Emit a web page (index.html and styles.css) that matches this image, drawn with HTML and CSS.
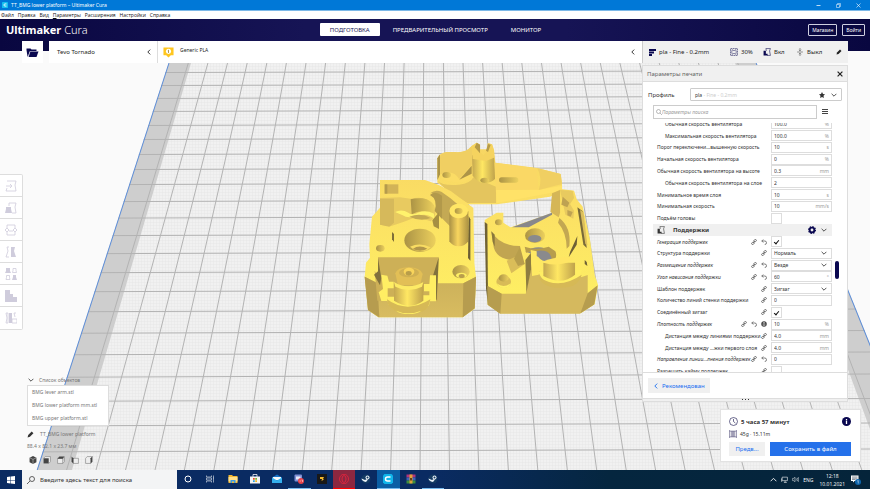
FILE: index.html
```html
<!DOCTYPE html>
<html lang="ru">
<head>
<meta charset="utf-8">
<title>TT_BMG lower platform – Ultimaker Cura</title>
<link rel="stylesheet" href="styles.css">
</head>
<body>
<svg class="sprite" aria-hidden="true">
  <symbol id="chev" viewBox="0 0 10 10"><path d="M1 3l4 4 4-4" fill="none" stroke="currentColor" stroke-width="1.4"/></symbol>
  <symbol id="left" viewBox="0 0 10 10"><path d="M7 1L3 5l4 4" fill="none" stroke="currentColor" stroke-width="1.5"/></symbol>
  <symbol id="link" viewBox="0 0 12 12"><g fill="none" stroke="currentColor" stroke-width="1.6"><rect x="5.5" y="1.5" width="5.5" height="4" rx="2" transform="rotate(-45 8 3.5)"/><rect x="1" y="6.500" width="5.500" height="4" rx="2" transform="rotate(-45 4 8.500)"/><path d="M4.500 7.500l3-3"/></g></symbol>
  <symbol id="reset" viewBox="0 0 12 12"><path d="M1.500 4h6a3.500 3.500 0 0 1 0 7M4.500 1l-3 3 3 3" fill="none" stroke="currentColor" stroke-width="1.500"/></symbol>
  <symbol id="pen" viewBox="0 0 12 12"><path d="M1 11l1-4 6-6 3 3-6 6z" fill="currentColor"/></symbol>
  <symbol id="support" viewBox="0 0 14 14"><path d="M5 1h8l-1.500 4 1.500 8H7M5 1l1 4" fill="none" stroke="currentColor"/><path d="M1 5h4v5h3v3H1z" fill="currentColor"/></symbol>
  <symbol id="steam" viewBox="0 0 20 20"><circle cx="10" cy="10" r="9" fill="#143a63"/><circle cx="13" cy="7" r="4" fill="#e9f0f6"/><circle cx="13" cy="7" r="2" fill="#143a63"/><path d="M1 9l7 3 4-2 2 1-4 5-4-1-4-3z" fill="#e9f0f6"/></symbol>
</svg>

<header class="titlebar">
  <svg class="app-icon" viewBox="0 0 14 14"><rect width="14" height="14" rx="2" fill="#16c0ee"/><path d="M10.500 4.500H7a2.500 2.500 0 0 0 0 5h3.500" fill="none" stroke="#fff" stroke-width="2"/></svg>
  <span class="window-title">TT_BMG lower platform – Ultimaker Cura</span>
  <div class="window-buttons">
    <button aria-label="Свернуть"><svg viewBox="0 0 10 10"><path d="M1 5h8" stroke="#fff" stroke-width="1.500"/></svg></button>
    <button aria-label="Развернуть"><svg viewBox="0 0 10 10"><path d="M1 3h6v6H1zM3 3V1h6v6H7" fill="none" stroke="#fff"/></svg></button>
    <button aria-label="Закрыть"><svg viewBox="0 0 10 10"><path d="M1 1l8 8M9 1L1 9" stroke="#fff" stroke-width="1.200"/></svg></button>
  </div>
</header>

<nav class="menubar">
  <a href="#">Файл</a><a href="#">Правка</a><a href="#">Вид</a><a href="#"><u>П</u>араметры</a><a href="#">Расширения</a><a href="#">Настройки</a><a href="#">Справка</a>
</nav>

<div class="mainbar">
  <div class="brand"><b>Ultimaker</b> <span>Cura</span></div>
  <div class="stages">
    <button class="stage active">ПОДГОТОВКА</button>
    <button class="stage">ПРЕДВАРИТЕЛЬНЫЙ ПРОСМОТР</button>
    <button class="stage">МОНИТОР</button>
  </div>
  <div class="account"><button>Магазин</button><button>Войти</button></div>
</div>

<div class="toolbar">
  <button class="open" aria-label="Открыть"><svg viewBox="0 0 26 22"><path d="M1 3h8l2 2h10v3H8L4 19H3L1 6z" fill="#0a0850"/><path d="M8 9h17l-4 11H5z" fill="#0a0850"/><path d="M8 9L4.500 19.500" stroke="#fff"/></svg></button>
  <div class="machine">
    <button class="printer"><span>Tevo Tornado</span><svg><use href="#left"/></svg></button>
    <button class="material">
      <svg class="extruder" viewBox="0 0 24 24"><path d="M1 1h22v17h-6l-5 5-5-5H1z" fill="#ffc61f"/><circle cx="12" cy="9.500" r="5.500" fill="#fff"/><path d="M10.500 8l1.500-1v6" fill="none" stroke="#8a6a10" stroke-width="1.500"/></svg>
      <span>Generic PLA</span><svg><use href="#left"/></svg>
    </button>
  </div>
  <button class="summary">
    <svg class="i-layers" viewBox="0 0 14 14"><path d="M0 0h14v4H0zM0 5h10v4H0zM0 10h6v4H0z" fill="#0a0850"/></svg>
    <span class="name">pla - Fine - 0.2mm</span>
    <svg class="i-mid" viewBox="0 0 14 14"><path d="M1 1h12v12H1z" fill="none" stroke="#0a0850" stroke-dasharray="3 1"/><path d="M4 3l3 2 3-2 1 4-1 4-3-2-3 2-1-4z" fill="none" stroke="#0a0850" stroke-width=".8"/></svg>
    <span class="infill">30%</span>
    <svg class="i-mid"><use href="#support"/></svg>
    <span class="sup">Вкл</span>
    <svg class="i-mid" viewBox="0 0 14 14"><path d="M2 7h10M7 0v5M7 14V9M5 3l2 2 2-2M5 11l2-2 2 2" fill="none" stroke="#555" stroke-width="1.100"/></svg>
    <span class="adh">Выкл</span>
    <svg class="i-pen"><use href="#pen"/></svg>
  </button>
</div>

<main class="viewport">
  <svg class="scene" viewBox="0 63 870 407" preserveAspectRatio="xMinYMin slice" aria-hidden="true">
    <defs>
      <clipPath id="bed"><path d="M168.500 63H756.600L921 470H36.700z"/></clipPath>
      <pattern id="fine" width="3" height="3" patternUnits="userSpaceOnUse"><path d="M0 .5h3M.5 0v3" stroke="#dcdcdc" stroke-width=".5"/></pattern>
      <linearGradient id="top" x1="0" y1="40" x2="0" y2="560" gradientUnits="userSpaceOnUse"><stop offset="0" stop-color="#f7d563"/><stop offset=".35" stop-color="#fbdf64"/><stop offset="1" stop-color="#fff263"/></linearGradient>
      <linearGradient id="cyl" x1="0" x2="1" y1="0" y2="0"><stop offset="0" stop-color="#aa9145"/><stop offset=".45" stop-color="#f8d55e"/><stop offset="1" stop-color="#ad9344"/></linearGradient>
      <linearGradient id="boss" x1="0" x2="1" y1="0" y2="0"><stop offset="0" stop-color="#c4a750"/><stop offset=".45" stop-color="#ffe763"/><stop offset="1" stop-color="#bfa24c"/></linearGradient>
      <linearGradient id="hole" x1="0" x2="1" y1="0" y2="0"><stop offset="0" stop-color="#ab9345"/><stop offset="1" stop-color="#ecd05d"/></linearGradient>
      <linearGradient id="front" x1="0" x2="0" y1="0" y2="1"><stop offset="0" stop-color="#cbb05a"/><stop offset="1" stop-color="#d8bc60"/></linearGradient>
    </defs>
    <rect y="63" width="870" height="407" fill="#fafafa"/>
    <g clip-path="url(#bed)">
      <path d="M168.500 63H756.600L921 470H36.700z" fill="#cecece"/>
      <path d="M191 63H735L885 470H72z" fill="#f1f1f1"/>
      <path d="M191 63H735L885 470H72z" fill="url(#fine)" opacity=".5"/>
      <path class="grid-x" d="M188.300 63L66.600 470M207.900 63L96 470M227.500 63L125.500 470M247.200 63L155 470M266.800 63L184.400 470M286.400 63L213.900 470M306 63L243.300 470M325.600 63L272.800 470M345.300 63L302.200 470M364.900 63L331.700 470M384.500 63L361.100 470M404.100 63L390.600 470M423.700 63L420 470M443.400 63L449.500 470M463 63L478.900 470M482.600 63L508.400 470M502.200 63L537.800 470M521.800 63L567.300 470M541.500 63L596.700 470M561.100 63L626.200 470M580.700 63L655.600 470M600.300 63L685.100 470M619.900 63L714.500 470M639.600 63L744 470M659.200 63L773.400 470M678.800 63L802.900 470M698.400 63L832.300 470M718 63L861.800 470M737.700 63L891.200 470"/>
      <path class="grid-y" d="M0 73L870 70.500M0 86L870 83.500M0 99L870 96M0 112L870 109M0 126L870 123M0 140L870 137M0 155L870 152M0 170L870 167M0 185L870 182M0 202L870 199M0 218.500L870 215.500M0 236L870 233M0 254L870 251M0 273L870 270M0 292L870 289M0 312L870 309M0 333.500L870 330.500M0 355L870 352M0 377.500L870 374M0 401.500L870 398.500M0 426L870 423M0 452L870 449"/>
      <path d="M168.500 63L36.700 470M756.600 63L921 470" stroke="#5f8fd8" stroke-width="2" fill="none"/>
    </g>
    <g transform="translate(350 130) scale(.3334)">
      <g class="arm">
        <path d="M262 85q6-17 28-19h25q32 4 50-18l15-10 10 6v14h22l2-18 12 3 6 17 4 38 126 16 70 18 4 32v20l-36 16-160 23H350l-88-65z" fill="url(#top)"/>
        <path d="M262 85l8-12v60l-8 18z" fill="#ac9447"/>
        <path d="M270 80q8-12 20-14h25q32 4 50-18l4 52-42 48q-12-22-56-16z" fill="#f0cf62"/>
        <path d="M262 152q15 16 65 12 35-4 43-22l68 28v49H352l-62-38z" fill="#e4c55e"/>
        <path d="M270 135q40-20 58 14l38-42v28q-14 30-60 20-30-2-36-20z" fill="#fbdc65"/>
        <path d="M328 149l37-42v24z" fill="#ad9448"/>
        <path d="M366 76l66-4 3 75q-12 12-32 12t-35-22z" fill="url(#boss)"/>
        <path d="M365 48l15-10 10 6v22l10 8 9-8 4-26 13 3 6 20v20l-24 10-40-6z" fill="#f5d35f"/>
        <path d="M374 52l6-14 10 6v26zM414 42l8 2-8 22-6-4z" fill="#b69b49"/>
        <path d="M434 98l126 17 6 65-128 12z" fill="#fad865"/>
        <path d="M438 180l130-1 68-12v15l-196 37z" fill="#ffe268"/>
        <path d="M562 115q16 30 4 65l70-18-4-30z" fill="#f0cf62"/>
        <ellipse cx="404" cy="151" rx="13" ry="8" fill="url(#hole)"/>
        <ellipse cx="290" cy="135" rx="13" ry="9" fill="url(#hole)"/>
        <rect x="447" y="142" width="58" height="16" rx="8" fill="url(#hole)"/>
      </g>
      <g class="platform">
        <path d="M90 150h135l40 14 38 20 67 50 3 165 5 42-4 95-36 26H85l-31-22-10-100 4-42 12-15-2-40 8-83 24-27z" fill="url(#top)"/>
        <path d="M90 204l60-2 32 4q50-10 70 20 12 30-10 48l-42-14-34 14-44 15-32-5z" fill="#e8ca60"/>
        <path d="M90 206h42v72l-14 12-28-6z" fill="#d6b95b"/>
        <path d="M104 163h41v28h-41z" fill="#d2b357"/><path d="M104 163h8v28h-8z" fill="#b59b4c"/>
        <path d="M182 208q14-4 35-3 28 4 36 28 0 18-16 18-20-15-52 2z" fill="url(#hole)"/>
        <path d="M135 246q20-10 40 2 12 10 32-1 22-8 45 4v15q-22-18-50-8-30 8-44-2z" fill="#fff26c"/>
        <path d="M178 260q34-14 64 4-30 12-64-4z" fill="#c3a853"/>
        <path d="M240 190q15-12 34-5 28 18 54 42l-26 18-2 44-24-24-10-56q-6-24-26-19z" fill="#c4a954"/>
        <path d="M240 195q14-14 36 2v70l-22-24q10-35-14-48z" fill="#b2994b"/>
        <path d="M247 271l20-24v50l-16-8z" fill="#a68f42"/>
        <path d="M298 244h57v90q-10 15-29 15t-28-15z" fill="url(#cyl)"/>
        <ellipse cx="326" cy="243" rx="28" ry="22" fill="#ffe665"/><ellipse cx="326" cy="243" rx="12" ry="9" fill="url(#hole)"/>
        <path d="M356 258l5 10v124l-7-8z" fill="#6b5d33"/>
        <path d="M126 306l6 6v24l-6-8z" fill="#7f6e38"/>
        <ellipse cx="210" cy="331" rx="47" ry="35" fill="url(#hole)"/>
        <path d="M180 350q30-14 62 2l-12 9q-18 5-38-2z" fill="#f8dc62"/>
        <path d="M188 357q20-14 44-1-20 12-44 1z" fill="#b1964a"/>
        <ellipse cx="91" cy="355" rx="13" ry="10" fill="url(#hole)"/><ellipse cx="333" cy="425" rx="26" ry="20" fill="url(#hole)"/><ellipse cx="334" cy="436" rx="16" ry="8" fill="#fff064"/><ellipse cx="335" cy="438" rx="9" ry="6" fill="#b99e4c"/>
        <path d="M44 440l40 20h256l38-20-4 95-36 27H85l-31-22z" fill="url(#front)"/>
        <path d="M44 440l38 20 6 102-34-22zM340 460l38-20-4 95-36 27z" fill="#b69c4f"/>
        <path d="M84 382h182l-4 132h-36l-20 20h-70l-20-22H82l-8-90 10 18z" fill="#cdb057"/>
        <path d="M84 384l10 60-4 22-18-32 12-10zM266 382l-6 128-12-10V440z" fill="#81713d"/>
        <path d="M136 430q6-18 40-18t42 20l-8 34h-66z" fill="#e2bf56"/>
        <ellipse cx="177" cy="428" rx="30" ry="14" fill="#d0b052"/><ellipse cx="177" cy="425" rx="16" ry="12" fill="#f8d45b"/><ellipse cx="176" cy="430" rx="9" ry="7" fill="#b89d4a"/>
        <path d="M94 434l18 3 5 18h14v20h-18v38H94l-8-26 13-10zM240 436h18v78h-20v-30h-16v-22h16z" fill="#ffee63"/>
        <path d="M111 500h22q42 32 84-4h24q4 34-22 44-38 20-84 0-25-12-24-40z" fill="#ffee63"/>
        <path d="M111 508q60 44 130 0-4 28-22 36-46 14-84-2-24-12-24-34z" fill="#d6b956"/>
        <path d="M132 458q40 24 88-2v56q-40 30-88 0z" fill="url(#boss)"/>
        <path d="M132 456q42 26 88 0l-4 14q-40 20-80 0z" fill="#fdea65"/>
        <path d="M138 542q36 16 76 0-12 10-38 10t-38-10z" fill="#fff063"/>
      </g>
      <g class="upper">
        <path d="M404 270l36-22h20v30l22 14 122-42 6-60 22-13 40 5 8 26 18 22 22 100 14 105 10 30-10 58-42 27H450l-37-26z" fill="url(#top)"/>
        <path d="M486 292l120-44v6l-70 38z" fill="#88888b"/>
        <path d="M404 276l8 6 2 242-6-48z" fill="#6f6135"/>
        <path d="M606 190l24-10v68l-4 14-25-16z" fill="#d5b657"/><path d="M630 180l38 2 4 22-12 18 12 20-2 24-24-12z" fill="#e8ca5f"/><path d="M638 200l20 18-6 14-18-8zM652 240l16 6-6 14-10-4z" fill="#bea252"/>
        <path d="M628 264q36 28 30 84l-8 8q0-48-26-78z" fill="#c2a752"/>
        <path d="M682 232l16 12 12 110-10-10z" fill="#796a39"/><path d="M690 240l10 6 12 100-6-4z" fill="#dcbf5d"/>
        <path d="M660 366l22-48-2 26-24 38zM704 390l6 6 2 12-8-6z" fill="#6e6035"/>
        <path d="M424 304q24 44 86 44v30l-30 12q-46-8-50-44z" fill="#c1a551"/><path d="M424 304l10 10v36l-6-14z" fill="#8a783c"/>
        <path d="M470 392l40-18 14 28-40 28z" fill="#dabd59"/><path d="M510 350l14 52-20 6-12-22z" fill="#b89e4c"/>
        <ellipse cx="555" cy="317" rx="30" ry="22" fill="url(#hole)"/><ellipse cx="554" cy="326" rx="20" ry="11" fill="#8a8a8c"/>
        <path d="M526 364q40-24 78 0 20 14 0 30-26 4-40-14z" fill="#8a8a8d"/>
        <path d="M524 350q34 12 72 0l20 14q8 18-10 32 0-38-42-34l-36 6z" fill="#b79d4d"/>
        <path d="M413 468l42 23h72l18-88 20 16 14 26 116-4 18-6v55l28-23-10 57-42 27H450l-37-27z" fill="#d5b95e"/>
        <path d="M413 468l42 23-4 60-38-27zM713 490l30-24-10 57-42 27z" fill="#b69d4f"/>
        <path d="M526 390l17-22v50l-14 70z" fill="#8e7d40"/>
        <path d="M542 360l18 4v20l14 20-8 30-20 4z" fill="#ffe963"/>
        <path d="M565 426h14q50 36 96-6h20q-6 40-42 46-70 8-88-40z" fill="#ffee63"/><path d="M566 440q60 42 129-6-6 30-42 38-74 8-87-32z" fill="#d6b956"/>
        <path d="M580 398h95v36q-40 34-95 4z" fill="url(#boss)"/><path d="M580 394q44-18 94-10-36 30-94 14z" fill="#ffe564"/>
        <ellipse cx="446" cy="277" rx="11" ry="9" fill="url(#hole)"/><ellipse cx="461" cy="455" rx="22" ry="18" fill="#d8bb57"/><ellipse cx="461" cy="444" rx="15" ry="11" fill="url(#hole)"/><path d="M440 460q20 16 42 0-4 14-20 14t-22-14z" fill="#fff165"/>
      </g>
    </g>
  </svg>

  <div class="tools">
    <button aria-label="Переместить"><svg viewBox="0 0 12 12"><path d="M2 1h9l-1 4 1 6H1l1-3M1 6h5M5 4l2 2-2 2"/></svg></button>
    <button aria-label="Масштаб"><svg viewBox="0 0 12 12"><path d="M4 4V1h7l-1 4 1 6H7"/><path class="solid" d="M1 5h5v2l1 4H0l1-4z"/></svg></button>
    <button aria-label="Повернуть"><svg viewBox="0 0 12 12"><path d="M2 4V1h8v3M2 8v3h8V8M0 6l2-2 2 2-2 2zM8 6l2-2 2 2-2 2zM4 7h4"/></svg></button>
    <button aria-label="Отразить"><svg viewBox="0 0 12 12"><path d="M4 1H2l1 4-2 6h3"/><path class="solid" d="M6 1h4L9 5l2 6H6z"/></svg></button>
    <button aria-label="Настройки модели"><svg viewBox="0 0 12 12"><path class="solid" d="M1 0h4v3l1 2H0l1-2zM8 7h3v2l1 3H7l1-3z"/><path d="M8 .5h3v2l.5 2h-4l.5-2zM1.500 7.500h3v2l.5 2H1l.5-2z"/></svg></button>
    <button aria-label="Блокировка поддержки"><svg viewBox="0 0 12 12"><path class="solid" d="M0 0h5v4h3v3h4v5H0z"/></svg></button>
    <button aria-label="Разделение"><svg viewBox="0 0 12 12"><path d="M1 1h2v10H1l1-5zM11 1H9l1 4M7 7h5v4H7z"/><path class="solid" d="M4 1h3v10H4z"/></svg></button>
  </div>

  <section class="objects">
    <button class="objects-head"><svg><use href="#chev"/></svg>Список объектов</button>
    <ul><li>BMG lever arm.stl</li><li>BMG lower platform mm.stl</li><li>BMG upper platform.stl</li></ul>
    <div class="job-name"><svg><use href="#pen"/></svg>TT_BMG lower platform</div>
    <div class="dims">88.4 x 82.1 x 23.7 мм</div>
    <div class="views">
      <button aria-label="3D"><svg viewBox="0 0 14 14"><path d="M7 0l6 3v8l-6 3-6-3V3z" fill="#444"/><path d="M1 3l6 3 6-3M7 6v8" stroke="#ccc" fill="none"/></svg></button>
      <button aria-label="Спереди"><svg viewBox="0 0 14 14"><path d="M1 4l3-3h9v9l-3 3" fill="#eee" stroke="#777"/><path d="M1 4h9v9H1z" fill="#444"/></svg></button>
      <button aria-label="Сверху"><svg viewBox="0 0 14 14"><path d="M1 4h9v9H1zM10 13l3-3V1" fill="#eee" stroke="#777"/><path d="M1 5l3-4h9l-3 4z" fill="#444"/></svg></button>
      <button aria-label="Слева"><svg viewBox="0 0 14 14"><path d="M4 4h9v9H4z" fill="#eee" stroke="#777"/><path d="M1 1l3 3v9l-3-3z" fill="#444"/></svg></button>
      <button aria-label="Справа"><svg viewBox="0 0 14 14"><path d="M1 4l3-3h9L10 4v9H1z" fill="#eee" stroke="#777"/><path d="M10 4l3-3v9l-3 3z" fill="#444"/></svg></button>
    </div>
  </section>

  <section class="settings">
    <div class="settings-head"><h2>Параметры печати</h2><button aria-label="Закрыть"><svg viewBox="0 0 10 10"><path d="M1 1l8 8M9 1L1 9" stroke="#222" stroke-width="2"/></svg></button></div>
    <div class="profile"><span class="profile-label">Профиль</span>
      <button class="profile-box"><span>pla <i>- Fine - 0.2mm</i></span><svg class="star" viewBox="0 0 12 12"><path d="M6 0l2 4 4 .5-3 3 .7 4.500L6 10l-3.700 2L3 7.500l-3-3L4 4z" fill="#333"/></svg><svg><use href="#chev"/></svg></button>
    </div>
    <div class="search-row">
      <label class="search"><svg viewBox="0 0 12 12"><circle cx="5" cy="5" r="4" fill="none" stroke="#777"/><path d="M8 8l4 4" stroke="#777"/></svg><input type="text" placeholder="Параметры поиска" aria-label="Параметры поиска"></label>
      <button aria-label="Видимость параметров"><svg viewBox="0 0 6 6"><path d="M0 .5h6M0 2.500h6M0 4.500h6" stroke="#444" stroke-width="1"/></svg></button>
    </div>
    <div class="scroll">
      <div class="rows">
        <div class="row child"><label for="f1">Обычная скорость вентилятора</label><span class="field"><input id="f1" value="100.0"><em>%</em></span></div>
        <div class="row child"><label for="f2">Максимальная скорость вентилятора</label><span class="field"><input id="f2" value="100.0"><em>%</em></span></div>
        <div class="row"><label for="f3">Порог переключени...вышенную скорость</label><span class="field"><input id="f3" value="10"><em>s</em></span></div>
        <div class="row"><label for="f4">Начальная скорость вентилятора</label><span class="field"><input id="f4" value="0"><em>%</em></span></div>
        <div class="row"><label for="f5">Обычная скорость вентилятора на высоте</label><span class="field"><input id="f5" value="0.3"><em>mm</em></span></div>
        <div class="row child"><label for="f6">Обычная скорость вентилятора на слое</label><span class="field"><input id="f6" value="2"></span></div>
        <div class="row"><label for="f7">Минимальное время слоя</label><span class="field"><input id="f7" value="10"><em>s</em></span></div>
        <div class="row"><label for="f8">Минимальная скорость</label><span class="field"><input id="f8" value="10"><em>mm/s</em></span></div>
        <div class="row"><label for="f9">Подъём головы</label><span class="tick"><input id="f9" type="checkbox"></span></div>
        <button class="category"><svg class="cat-icon"><use href="#support"/></svg><b>Поддержки</b><svg class="gear" viewBox="0 0 14 14"><circle cx="7" cy="7" r="4.200" fill="none" stroke="#0a0850" stroke-width="3.400"/><circle cx="7" cy="7" r="6" fill="none" stroke="#0a0850" stroke-width="2" stroke-dasharray="2.350"/></svg><svg class="arrow"><use href="#chev"/></svg></button>
        <div class="row changed"><label for="f10">Генерация поддержек</label><svg><use href="#link"/></svg><svg><use href="#reset"/></svg><span class="tick"><input id="f10" type="checkbox" checked></span></div>
        <div class="row"><label for="f11">Структура поддержки</label><svg><use href="#link"/></svg><span class="field"><select id="f11"><option>Нормаль</option></select><svg><use href="#chev"/></svg></span></div>
        <div class="row changed"><label for="f12">Размещение поддержек</label><svg><use href="#link"/></svg><svg><use href="#reset"/></svg><span class="field"><select id="f12"><option>Везде</option></select><svg><use href="#chev"/></svg></span></div>
        <div class="row changed"><label for="f13">Угол нависания поддержки</label><svg><use href="#link"/></svg><svg><use href="#reset"/></svg><span class="field"><input id="f13" value="60"><em>°</em></span></div>
        <div class="row"><label for="f14">Шаблон поддержек</label><svg><use href="#link"/></svg><span class="field"><select id="f14"><option>Зигзаг</option></select><svg><use href="#chev"/></svg></span></div>
        <div class="row"><label for="f15">Количество линий стенки поддержки</label><svg><use href="#link"/></svg><span class="field"><input id="f15" value="0"></span></div>
        <div class="row"><label for="f16">Соединённый зигзаг</label><svg><use href="#link"/></svg><span class="tick"><input id="f16" type="checkbox" checked></span></div>
        <div class="row changed"><label for="f17">Плотность поддержек</label><svg><use href="#link"/></svg><svg><use href="#reset"/></svg><svg viewBox="0 0 12 12"><circle cx="6" cy="6" r="5.500" fill="#444"/><path d="M4 3h4M5 3l-1 6h4L7 3M6 5v3" stroke="#ccc" fill="none"/></svg><span class="field"><input id="f17" value="10"><em>%</em></span></div>
        <div class="row child"><label for="f18">Дистанция между линиями поддержки</label><svg><use href="#link"/></svg><span class="field"><input id="f18" value="4.0"><em>mm</em></span></div>
        <div class="row child"><label for="f19">Дистанция между ...жки первого слоя</label><svg><use href="#link"/></svg><span class="field"><input id="f19" value="4.0"><em>mm</em></span></div>
        <div class="row changed"><label for="f20">Направление линии...лнения поддержек</label><svg><use href="#link"/></svg><svg><use href="#reset"/></svg><span class="field"><input id="f20" value="0"></span></div>
        <div class="row"><label for="f21">Разрешить кайму поддержек</label><svg><use href="#link"/></svg><span class="tick"><input id="f21" type="checkbox"></span></div>
      </div>
      <div class="thumb"></div>
    </div>
    <div class="settings-foot"><button><svg><use href="#left"/></svg>Рекомендован</button></div>
    <div class="grip"><i></i><i></i><i></i></div>
  </section>

  <section class="job">
    <div class="job-time"><svg viewBox="0 0 14 14"><circle cx="7" cy="7" r="6.200" fill="none" stroke="#1a1750"/><path d="M7 3v4l3 2.500" fill="none" stroke="#1a1750"/></svg><b>5 часа 57 минут</b><svg class="info" viewBox="0 0 14 14"><circle cx="7" cy="7" r="7" fill="#0a0850"/><path d="M7 3v2M7 6v5" stroke="#fff" stroke-width="2"/></svg></div>
    <div class="job-mat"><svg viewBox="0 0 14 14"><path d="M1 0v14M13 0v14M1 2h12M1 12h12" stroke="#4d4a75"/><path d="M4 2v10M6 2v10M8 2v10M10 2v10" stroke="#4d4a75"/></svg><span>45g · 15.11m</span></div>
    <div class="job-actions"><button class="preview">Предв...</button><button class="save">Сохранить в файл</button></div>
  </section>
</main>

<footer class="taskbar">
  <button class="start" aria-label="Пуск"><svg viewBox="0 0 16 16"><path d="M0 2l7-1v7H0zM8 1l8-1v8H8zM0 9h7v6l-7-1zM8 9h8v7l-8-1z" fill="#fff"/></svg></button>
  <label class="win-search"><svg viewBox="0 0 16 16"><circle cx="10" cy="6" r="5" fill="none" stroke="#333" stroke-width="1.500"/><path d="M6 10l-6 6" stroke="#333" stroke-width="1.500"/></svg><input type="text" placeholder="Введите здесь текст для поиска" aria-label="Поиск"></label>
  <div class="apps">
    <button aria-label="Cortana"><svg viewBox="0 0 20 20"><circle cx="10" cy="10" r="6" fill="none" stroke="#fff" stroke-width="2"/></svg></button>
    <button aria-label="Представление задач"><svg viewBox="0 0 20 20"><path d="M3 3v3h10V3M3 17v-3h10v3M3 8h10v4H3zM17 3v14M16 8h2" fill="none" stroke="#d5dbe6" stroke-width="1.300"/></svg></button>
    <button aria-label="Проводник"><svg viewBox="0 0 20 20"><path d="M1 2h7l2 2h9v14H1z" fill="#f3b731"/><path d="M1 6h18v9H1z" fill="#ffe08a"/><path d="M5 12h10v6h-3v-3H8v3H5z" fill="#3f9be0"/></svg></button>
    <button aria-label="Магазин"><svg viewBox="0 0 20 20"><path d="M6 6V1h8v5" fill="none" stroke="#fff" stroke-width="1.500"/><path d="M0 5h20v14H0z" fill="#f4f4f4"/><path d="M6 8h3.500v3.500H6z" fill="#e8502a"/><path d="M10.500 8H14v3.500h-3.500z" fill="#7cb82f"/><path d="M6 12.500h3.500V16H6z" fill="#2a9fe0"/><path d="M10.500 12.500H14V16h-3.500z" fill="#f5b81c"/></svg></button>
    <button aria-label="Почта"><svg viewBox="0 0 20 20"><path d="M0 7l10-6 10 6v11H0z" fill="#1873c8"/><path d="M2 6h16v6H2z" fill="#f5f8fb"/><path d="M0 7l10 6 10-6v11H0z" fill="#33b0ee"/></svg></button>
    <button class="running" aria-label="Discord"><svg viewBox="0 0 20 20"><rect x="1" y="1" width="15" height="14" rx="2" fill="#7f8fd4"/><path d="M4 5h9v6H4z" fill="#e8ebfa"/><circle cx="14" cy="14" r="6" fill="#e8434a"/><path d="M11 14h3M15 12h2v4" stroke="#fff" fill="none"/></svg></button>
    <button aria-label="Rockstar"><svg viewBox="0 0 20 20"><rect width="20" height="20" fill="#181818"/><path d="M6 6h8l-2 4 2 1-5 3 1-4H6z" fill="#f2b72e"/></svg></button>
    <button class="opera" aria-label="Opera"><svg viewBox="0 0 20 20"><ellipse cx="10" cy="10" rx="9" ry="9.500" fill="none" stroke="#f1243d" stroke-width="1.500"/><ellipse cx="10" cy="10" rx="4" ry="7" fill="none" stroke="#f1243d" stroke-width="1.500"/></svg></button>
    <button aria-label="Steam"><svg><use href="#steam"/></svg></button>
    <button class="running current" aria-label="Cura"><svg viewBox="0 0 20 20"><path d="M3 0h14l3 3v14l-3 3H3l-3-3V3z" fill="#10b5ea"/><path d="M15 6H9a4 4 0 0 0 0 8h6" fill="none" stroke="#fff" stroke-width="3"/></svg></button>
    <button aria-label="WinRAR"><svg viewBox="0 0 20 20"><path d="M1 1h18v6H1z" fill="#b1347c"/><path d="M1 7h18v6H1z" fill="#3f63b8"/><path d="M1 13h18v6H1z" fill="#3f8e3d"/><path d="M7 1h6v18H7z" fill="#e0a23a"/><path d="M8 8h4v5H8z" fill="#6b3d12"/></svg></button>
    <button class="running" aria-label="Steam"><svg><use href="#steam"/></svg></button>
  </div>
  <div class="tray">
    <svg viewBox="0 0 12 12"><path d="M1 9l5-5 5 5" fill="none" stroke="#fff" stroke-width="1.500"/></svg>
    <svg viewBox="0 0 12 12"><path d="M2 2h9v6H2zM5 11h5M7 8v3M1 4v6" fill="none" stroke="#fff"/></svg>
    <svg viewBox="0 0 12 12"><path d="M1 4h2l2-2v8L3 8H1zM7 4q1 2 0 4M9 3q2 3 0 6M11 2q1.500 4 0 8" fill="none" stroke="#fff" stroke-width=".8"/></svg>
    <span>ENG</span>
    <time><span>12:18</span><span>10.01.2021</span></time>
    <button aria-label="Уведомления"><svg viewBox="0 0 20 20"><path d="M0 1h15v11H7l-3 3v-3H0z" fill="#fff"/><path d="M2 4h11M2 6.500h11M2 9h7" stroke="#234"/><circle cx="14" cy="14" r="6" fill="#0b64ad"/><path d="M12.500 12l2-1v6" stroke="#fff" fill="none"/></svg></button>
  </div>
</footer>
</body>
</html>
```
FILE: styles.css
```css
* { box-sizing: border-box; margin: 0; padding: 0; }
html, body { height: 100%; }
body {
  display: flex; flex-direction: column; overflow: hidden;
  background: #fafafa; color: #333;
  font: 5px/8px "Noto Sans", "Open Sans", sans-serif;
}
button, input, select { font: inherit; color: inherit; background: none; border: 0; outline: 0; border-radius: 0; min-width: 0; }
button { display: flex; align-items: center; }
a { color: inherit; text-decoration: none; }
svg { width: 6px; height: 6px; flex: none; display: block; }
.sprite { position: absolute; width: 0; height: 0; }

.titlebar { flex: none; height: 11px; display: flex; align-items: center; gap: 3px; padding: 0 9px 0 2px; background: #0078d7; border-bottom: 1px solid #7db9e8; color: #fff; }
.app-icon { width: 6px; height: 6px; }
.window-title { flex: 1; }
.window-buttons { display: flex; gap: 15px; }
.window-buttons svg { width: 5px; height: 5px; }

.menubar { flex: none; height: 8px; display: flex; gap: 4px; padding: 0 1px; background: #fff; color: #111; font-family: "Open Sans", sans-serif; }

.mainbar { flex: none; height: 32px; display: grid; grid-template-columns: 1fr auto 1fr; align-items: start; padding: 0 5px 0 6px; background: linear-gradient(90deg, #090740, #161455 35%, #161455 65%, #090740); color: #fff; }
.brand { font-size: 11px; line-height: 22px; white-space: nowrap; }
.brand span { font-weight: 300; }
.stages { display: flex; gap: 3px; padding-top: 4px; }
.stage { height: 13px; padding: 0 10px; font-size: 6px; border-radius: 1px; }
.stage.active { background: #fff; color: #161455; }
.account { display: flex; justify-content: flex-end; gap: 5px; padding-top: 5px; }
.account button { height: 12px; padding: 0 3px; border: 1px solid #cfcfe0; border-radius: 1px; }

.toolbar { flex: none; position: relative; height: 22px; margin: -10px 22px 0; display: flex; color: #222; font-size: 6px; }
.open { width: 21px; margin-right: 6px; justify-content: center; background: #fff; }
.open svg { width: 13px; height: 11px; }
.machine { flex: 1; display: flex; background: #fff; }
.machine button svg:last-child { margin-left: auto; }
.printer { width: 109px; padding: 0 5px 0 8px; border-right: 1px solid #ddd; }
.material { flex: 1; padding: 0 6px 0 5px; font-size: 5px; gap: 6px; }
.material .extruder { width: 11px; height: 11px; }
.material span { padding-bottom: 4px; }
.summary { width: 206px; padding: 0 6px; background: #f0f0f0; border-left: 1px solid #ccc; }
.i-layers { width: 7px; height: 7px; }
.i-mid { width: 8px; height: 8px; color: #0a0850; }
.summary .name { flex: 1; margin-left: 3px; text-align: left; }
.summary .infill, .summary .sup, .summary .adh { margin-left: 3px; text-align: left; }
.summary .infill, .summary .sup { width: 22px; }
.summary .adh { width: 29px; }

.viewport { position: relative; flex: 1; min-height: 0; overflow: hidden; }
.scene { position: absolute; inset: 0; width: 100%; height: 100%; }
.grid-x, .grid-y { fill: none; stroke: #b3b3b3; stroke-width: 1; }

.tools { position: absolute; left: 0; top: 111px; width: 23px; border: 1px solid #ddd; border-left: 0; border-radius: 0 2px 2px 0; background: #fff; }
.tools button { width: 100%; height: 22px; justify-content: center; border-bottom: 1px solid #ddd; }
.tools button:last-child { border-bottom: 0; }
.tools svg { width: 12px; height: 12px; fill: none; stroke: #cfccdc; stroke-width: .8; }
.tools .solid { fill: #cfccdc; stroke: none; }

.objects { position: absolute; left: 27px; bottom: 6px; color: #777; }
.objects-head { gap: 5px; height: 10px; }
.objects-head svg { margin-left: 1px; color: #333; }
.objects ul { list-style: none; width: 82px; border: 1px solid #ddd; background: #fff; }
.objects li { height: 13px; padding-left: 4px; line-height: 13px; }
.job-name { display: flex; align-items: center; gap: 6px; height: 10px; margin-top: 3px; }
.job-name svg { width: 7px; height: 7px; color: #333; }
.dims { margin-top: 3px; }
.views { display: flex; gap: 6px; margin: 6px 0 0 2px; }
.views svg { width: 8px; height: 8px; }

.settings { position: absolute; right: 22px; top: 2px; width: 206px; background: #fff; border: 1px solid #ddd; }
.settings-head { height: 16px; display: flex; align-items: center; justify-content: space-between; padding: 0 4px; background: #f0f0f0; border-bottom: 1px solid #ddd; color: #666; }
.settings-head h2 { font-size: 6px; font-weight: 400; }
.profile { display: flex; align-items: center; padding: 6px 5px 4px; }
.profile-label { width: 42px; font-size: 6px; }
.profile-box { flex: 1; height: 13px; padding: 0 4px; border: 1px solid #ccc; border-radius: 1px; gap: 6px; }
.profile-box span { flex: 1; text-align: left; }
.profile-box i { color: #ccc; font-style: normal; }
.search-row { display: flex; align-items: center; gap: 5px; padding: 0 11px 4px 10px; }
.search { display: flex; align-items: center; width: 164px; height: 14px; padding: 0 2px; border: 1px solid #ccc; }
.search input { flex: 1; font-style: italic; }
::placeholder { color: #999; opacity: 1; }

.scroll { position: relative; height: 249px; overflow: hidden; padding-left: 10px; }
.rows { display: grid; grid-template-columns: minmax(0, 1fr); grid-template-rows: repeat(22, 1fr); width: 179px; height: 259px; margin-top: -5px; }
.row { display: flex; align-items: center; gap: 4px; padding-left: 4px; min-height: 0; white-space: nowrap; }
.row.child { padding-left: 12px; }
.row label { flex: 1; min-width: 0; }
.row.changed label { font-style: italic; }
.row > svg { color: #555; }
.field { flex: none; width: 61px; height: 11px; display: flex; align-items: center; padding: 0 2px; border: 1px solid #ddd; background: #fff; }
.field input, .field select { flex: 1; width: 10px; height: 8px; appearance: none; }
.field em { font-style: normal; color: #999; }
.field svg { margin-right: 2px; }
.tick { flex: none; width: 61px; }
.tick input { display: block; width: 11px; height: 11px; appearance: none; border: 1px solid #ddd; background: #fff; }
.tick input:checked::after { content: ""; display: block; width: 4px; height: 2px; margin: 3px 2px; border: solid #111; border-width: 0 0 1px 1px; transform: rotate(-50deg); }
.category { padding: 0 5px 0 4px; background: #f0f0f0; font-size: 6px; }
.category b { flex: 1; margin-left: 8px; text-align: left; }
.cat-icon { width: 8px; height: 8px; }
.gear { width: 8px; height: 8px; margin-right: 5px; }
.thumb { position: absolute; right: 8px; top: 138px; width: 4px; height: 18px; border-radius: 2px; background: #0a0850; }
.settings-foot { height: 26px; padding: 5px; border-top: 1px solid #ddd; }
.settings-foot button { height: 15px; padding: 0 5px; gap: 3px; background: #f0f0f0; color: #196ef0; font-size: 6px; }
.grip { height: 3px; display: flex; justify-content: center; gap: 2px; border-top: 1px solid #ddd; background: #f0f0f0; }
.grip i { width: 1px; height: 1px; background: #333; }

.job { position: absolute; right: 9px; bottom: 8px; width: 141px; padding: 6px 9px 5px 8px; background: #fff; border: 1px solid #e2e2e2; }
.job-time, .job-mat { display: flex; align-items: center; gap: 3px; }
.job-time { height: 11px; font-size: 6px; }
.job-time svg { width: 9px; height: 9px; }
.job-time .info { margin-left: auto; }
.job-mat { height: 14px; }
.job-mat svg { width: 8px; height: 8px; }
.job-actions { display: flex; gap: 5px; margin-top: 1px; }
.job-actions button { height: 14px; justify-content: center; font-size: 6px; }
.preview { width: 36px; background: #f0f0f0; color: #196ef0; }
.save { flex: 1; background: #2571ea; color: #fff; }

.taskbar { flex: none; height: 19px; display: flex; background: linear-gradient(90deg, #0a2b62 0%, #0a2b62 50%, #05263f 70%, #05243a); color: #fff; font-family: "Open Sans", sans-serif; }
.start { width: 22px; justify-content: center; }
.start svg { width: 8px; height: 8px; }
.win-search { width: 155px; display: flex; align-items: center; gap: 5px; padding: 0 5px; background: #f3f4f5; color: #333; font: 6px "Noto Sans", sans-serif; }
.win-search svg { width: 8px; height: 8px; }
.win-search input { flex: 1; }
.win-search ::placeholder { color: #333; }
.apps { display: grid; grid-template-columns: repeat(12, 1fr); width: 267px; }
.apps button { justify-content: center; border-bottom: 1px solid transparent; }
.apps svg { width: 10px; height: 10px; }
.apps .running { border-color: #76b9ed; }
.apps .current { background: #0b5fa5; }
.apps .opera { background: #8c2740; border-color: #f00; }
.tray { margin-left: auto; display: flex; align-items: center; gap: 4px; padding-right: 9px; }
.tray svg { width: 7px; height: 7px; }
.tray time { display: flex; flex-direction: column; align-items: center; margin: 0 2px; }
.tray button svg { width: 10px; height: 10px; }
```
